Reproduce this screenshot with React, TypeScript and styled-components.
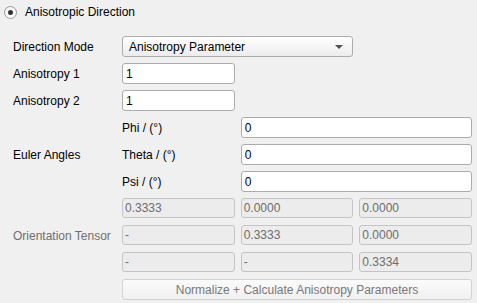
import React from "react";
import styled, { createGlobalStyle } from "styled-components";

const Global = createGlobalStyle`
  html, body { margin: 0; padding: 0; background: #f0f0f0; }
  body { font-family: "Liberation Sans", Arial, sans-serif; font-size: 12px; color: #000; }
`;

const Page = styled.div`
  width: 477px;
  height: 303px;
  box-sizing: border-box;
  padding: 5px 5px 0 4px;
  display: flex;
  flex-direction: column;
`;

const Header = styled.label`
  display: flex;
  align-items: center;
  gap: 8px;
  height: 14px;
`;

const Radio = styled.span`
  width: 11px;
  height: 11px;
  border-radius: 50%;
  border: 1px solid #9a9a9a;
  background: linear-gradient(#f4f4f4, #ffffff);
  display: flex;
  align-items: center;
  justify-content: center;
  &::after {
    content: "";
    width: 5px;
    height: 5px;
    border-radius: 50%;
    background: #333;
  }
`;

const Grid = styled.div`
  margin-top: 17px;
  margin-left: 9px;
  display: grid;
  grid-template-columns: 103px 1fr 1fr 1fr;
  grid-auto-rows: 21px;
  column-gap: 6px;
  row-gap: 6px;
`;

const Label = styled.div<{ $span?: number; $muted?: boolean }>`
  grid-column: 1;
  grid-row: ${(p) => (p.$span ? `span ${p.$span}` : "span 1")};
  align-self: center;
  color: ${(p) => (p.$muted ? "#6f6f6f" : "#000")};
  white-space: nowrap;
`;

const SubLabel = styled.div`
  grid-column: 2;
  align-self: center;
  white-space: nowrap;
`;

const Field = styled.div<{ $col: number; $span: number }>`
  grid-column: ${(p) => `${p.$col} / span ${p.$span}`};
  box-sizing: border-box;
  height: 21px;
  border: 1px solid #acacac;
  border-radius: 3px;
  background: #fff;
  padding: 0 3px;
  display: flex;
  align-items: center;
  white-space: nowrap;
`;

const Disabled = styled.div<{ $col: number }>`
  grid-column: ${(p) => p.$col};
  box-sizing: border-box;
  height: 20px;
  border: 1px solid #c4c4c4;
  border-radius: 3px;
  background: #ececec;
  color: #6d6d6d;
  padding: 0 2px;
  display: flex;
  align-items: center;
`;

const Combo = styled.div`
  grid-column: 2 / span 2;
  box-sizing: border-box;
  height: 21px;
  border: 1px solid #acacac;
  border-radius: 3px;
  background: linear-gradient(#ffffff, #ececec);
  padding: 0 9px 0 6px;
  display: flex;
  align-items: center;
  justify-content: space-between;
`;

const Arrow = styled.span`
  width: 0;
  height: 0;
  border-left: 4px solid transparent;
  border-right: 4px solid transparent;
  border-top: 4px solid #505050;
`;

const Button = styled.div`
  grid-column: 2 / span 3;
  box-sizing: border-box;
  height: 21px;
  border: 1px solid #d2d2d2;
  border-radius: 3px;
  background: linear-gradient(#fbfbfb, #f0f0f0);
  color: #787878;
  display: flex;
  align-items: center;
  justify-content: center;
`;

const tensor = [
  ["0.3333", "0.0000", "0.0000"],
  ["-", "0.3333", "0.0000"],
  ["-", "-", "0.3334"],
];

export default function App() {
  return (
    <>
      <Global />
      <Page>
        <Header>
          <Radio />
          <span>Anisotropic Direction</span>
        </Header>
        <Grid>
          <Label>Direction Mode</Label>
          <Combo>
            <span>Anisotropy Parameter</span>
            <Arrow />
          </Combo>
          <Label>Anisotropy 1</Label>
          <Field $col={2} $span={1}>1</Field>
          <Label>Anisotropy 2</Label>
          <Field $col={2} $span={1}>1</Field>

          <Label $span={3}>Euler Angles</Label>
          <SubLabel>Phi / (°)</SubLabel>
          <Field $col={3} $span={2}>0</Field>
          <SubLabel>Theta / (°)</SubLabel>
          <Field $col={3} $span={2}>0</Field>
          <SubLabel>Psi / (°)</SubLabel>
          <Field $col={3} $span={2}>0</Field>

          <Label $span={3} $muted>Orientation Tensor</Label>
          {tensor.map((row, r) =>
            row.map((v, c) => (
              <Disabled key={`${r}-${c}`} $col={c + 2}>
                {v}
              </Disabled>
            ))
          )}
          <Label />
          <Button>Normalize + Calculate Anisotropy Parameters</Button>
        </Grid>
      </Page>
    </>
  );
}
